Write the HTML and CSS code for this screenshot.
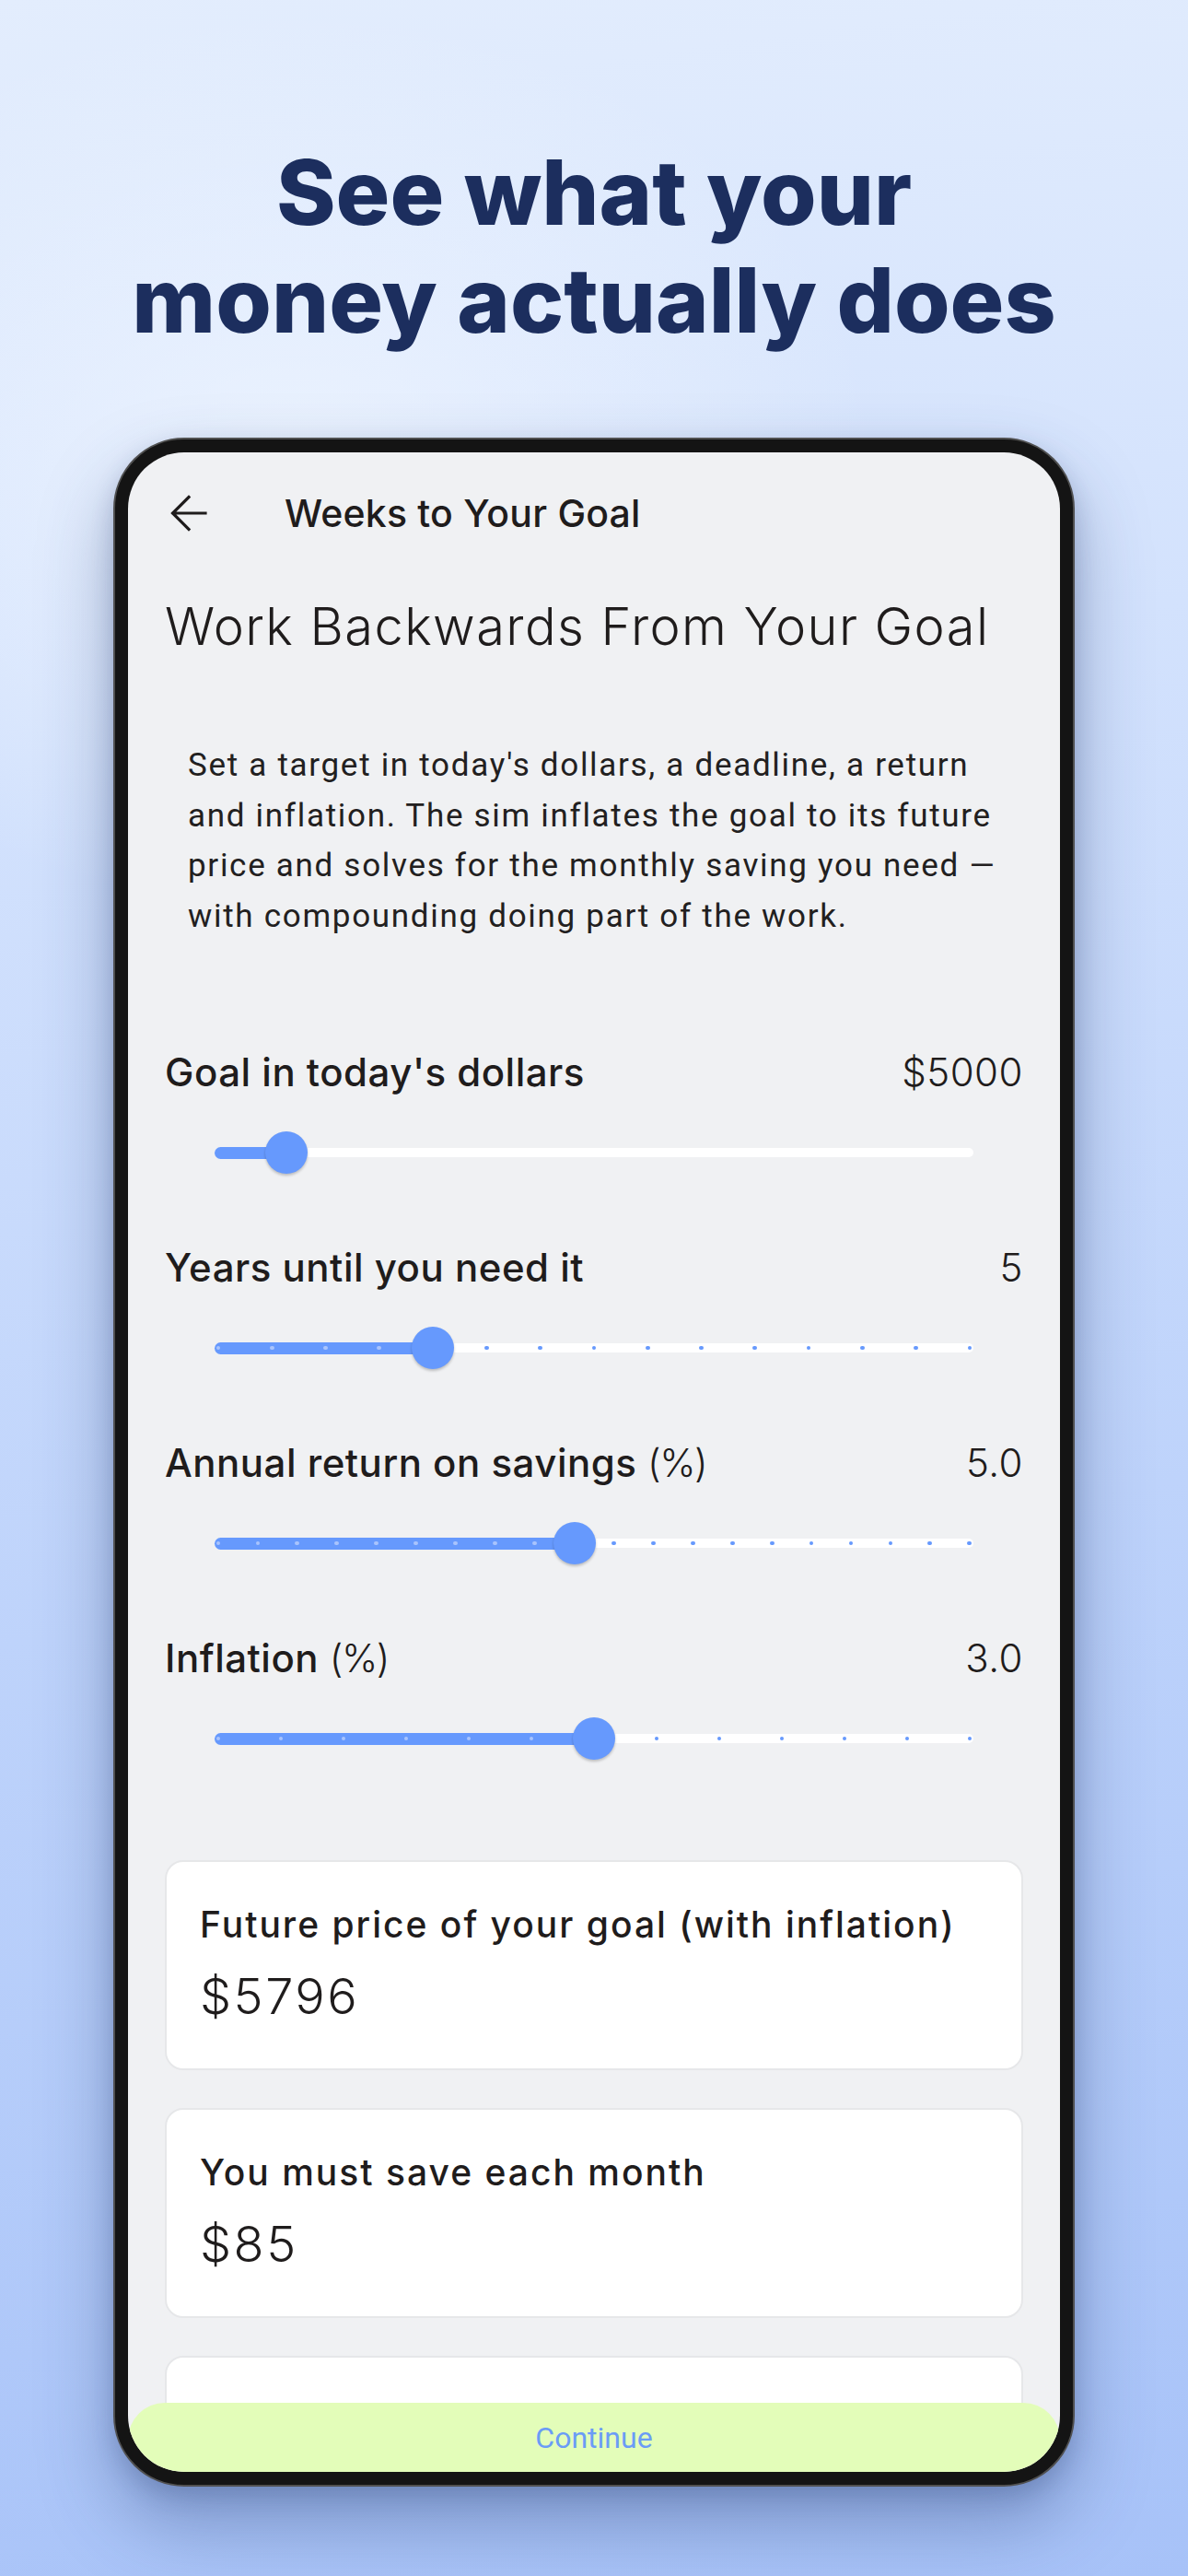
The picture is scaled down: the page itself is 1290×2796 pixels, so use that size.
FILE: index.html
```html
<!DOCTYPE html>
<html lang="en">
<head>
<meta charset="utf-8">
<title>See what your money actually does</title>
<link rel="stylesheet" href="styles.css">
</head>
<body>
<div class="page">
  <h1 class="headline">See what your<br>money actually does</h1>

  <div class="phone">
    <div class="screen">
      <header class="appbar">
        <svg class="back" viewBox="0 0 40 40" width="40" height="40" aria-hidden="true">
          <path d="M38 20 H3 M20 2.5 L2.5 20 L20 37.5" fill="none" stroke="#1f1c1c" stroke-width="3.2" stroke-linecap="square" stroke-linejoin="miter"/>
        </svg>
        <span class="appbar-title">Weeks to Your Goal</span>
      </header>

      <main class="content">
        <h2 class="title">Work Backwards From Your Goal</h2>
        <p class="desc">Set a target in today's dollars, a deadline, a return and inflation. The sim inflates the goal to its future price and solves for the monthly saving you need — with compounding doing part of the work.</p>

        <section class="field">
          <div class="field-row"><span class="field-label">Goal in today's dollars</span><span class="field-value">$5000</span></div>
          <div class="slider">
            <div class="track">
              <div class="active" style="--p:0.0909"></div>
              <div class="thumb" style="--p:0.0909"></div>
            </div>
          </div>
        </section>

        <section class="field">
          <div class="field-row"><span class="field-label">Years until you need it</span><span class="field-value">5</span></div>
          <div class="slider">
            <div class="track">
              <div class="active" style="--p:0.2857"></div>
              <div class="dots">
                <i class="on"></i><i class="on"></i><i class="on"></i><i class="on"></i><i class="on"></i>
                <i></i><i></i><i></i><i></i><i></i><i></i><i></i><i></i><i></i><i></i>
              </div>
              <div class="thumb" style="--p:0.2857"></div>
            </div>
          </div>
        </section>

        <section class="field">
          <div class="field-row"><span class="field-label">Annual return on savings <span class="pct">(%)</span></span><span class="field-value">5.0</span></div>
          <div class="slider">
            <div class="track">
              <div class="active" style="--p:0.47368"></div>
              <div class="dots">
                <i class="on"></i><i class="on"></i><i class="on"></i><i class="on"></i><i class="on"></i>
                <i class="on"></i><i class="on"></i><i class="on"></i><i class="on"></i><i class="on"></i>
                <i></i><i></i><i></i><i></i><i></i><i></i><i></i><i></i><i></i><i></i>
              </div>
              <div class="thumb" style="--p:0.47368"></div>
            </div>
          </div>
        </section>

        <section class="field">
          <div class="field-row"><span class="field-label">Inflation <span class="pct">(%)</span></span><span class="field-value">3.0</span></div>
          <div class="slider">
            <div class="track">
              <div class="active" style="--p:0.5"></div>
              <div class="dots">
                <i class="on"></i><i class="on"></i><i class="on"></i><i class="on"></i><i class="on"></i>
                <i class="on"></i><i class="on"></i>
                <i></i><i></i><i></i><i></i><i></i><i></i>
              </div>
              <div class="thumb" style="--p:0.5"></div>
            </div>
          </div>
        </section>

        <div class="cards">
          <div class="card">
            <div class="card-label">Future price of your goal (with inflation)</div>
            <div class="card-value">$5796</div>
          </div>
          <div class="card">
            <div class="card-label">You must save each month</div>
            <div class="card-value">$85</div>
          </div>
          <div class="card">
            <div class="card-label">&nbsp;</div>
            <div class="card-value">&nbsp;</div>
          </div>
        </div>
      </main>

      <button class="continue" type="button">Continue</button>
    </div>
  </div>
</div>
</body>
</html>
```

FILE: styles.css
```css
* { box-sizing: border-box; }

html, body {
  margin: 0;
  padding: 0;
}

body {
  width: 1290px;
  height: 2796px;
  overflow: hidden;
  font-family: Inter, "Noto Sans", sans-serif;
  background:
    radial-gradient(ellipse 900px 700px at 25% 18%, rgba(240, 246, 255, 0.75), rgba(240, 246, 255, 0) 70%),
    linear-gradient(172deg, #e3edfd 0%, #d3e2fd 28%, #bed3fb 60%, #a7c2f8 100%);
}

.page {
  display: flex;
  flex-direction: column;
  align-items: center;
  height: 2796px;
}

.headline {
  margin: 150px 0 0;
  font-family: Inter, "Noto Sans", sans-serif;
  font-weight: 800;
  font-size: 98px;
  line-height: 117px;
  letter-spacing: 0;
  color: #1c2e5e;
  text-align: center;
}

.phone {
  margin-top: 91px;
  width: 1044px;
  height: 2224px;
  padding: 14px;
  background: #141414;
  border: 2px solid #505050;
  border-radius: 77px;
  box-shadow: 0 40px 80px rgba(40, 62, 115, 0.38), 0 10px 24px rgba(40, 62, 115, 0.2);
}

.screen {
  width: 100%;
  height: 100%;
  background: #f0f1f3;
  border-radius: 61px;
  overflow: hidden;
  display: flex;
  flex-direction: column;
}

.appbar {
  flex: none;
  height: 132px;
  display: flex;
  align-items: center;
  padding-left: 46px;
}

.back {
  flex: none;
  display: block;
}

.appbar-title {
  margin-left: 84px;
  font-size: 41px;
  line-height: 50px;
  font-weight: 500;
  color: #1f1c1c;
  letter-spacing: 0.2px;
}

.content {
  flex: 1;
  min-height: 0;
  overflow: hidden;
  padding: 0 40px;
}

.title {
  margin: 24px 0 0;
  font-size: 56px;
  line-height: 67px;
  font-weight: 300;
  color: #1f1c1c;
  letter-spacing: 1.4px;
}

.desc {
  margin: 90px 0 0;
  padding-left: 25px;
  font-family: Roboto, "Liberation Sans", sans-serif;
  font-size: 35px;
  line-height: 54.5px;
  letter-spacing: 1.7px;
  color: #222020;
}

.field {
  margin-top: 52px;
}

.field:first-of-type {
  margin-top: 117px;
}

.field-row {
  display: flex;
  justify-content: space-between;
  align-items: baseline;
  height: 50px;
  font-size: 42px;
  line-height: 50px;
  color: #1f1c1c;
}

.field-label {
  font-weight: 500;
  letter-spacing: 0.5px;
}

.pct {
  font-weight: 300;
  letter-spacing: -1.5px;
}

.field-value {
  font-weight: 300;
  letter-spacing: 0.5px;
}

.slider {
  margin-top: 14px;
  height: 96px;
  padding: 0 54px;
  display: flex;
  align-items: center;
}

.track {
  position: relative;
  width: 100%;
  height: 10px;
  border-radius: 5px;
  background: #ffffff;
}

.active {
  position: absolute;
  left: 0;
  top: -1.5px;
  height: 13px;
  width: calc(4px + var(--p) * (100% - 8px));
  border-radius: 6.5px;
  background: #6699fd;
}

.dots {
  position: absolute;
  inset: 0;
  display: flex;
  justify-content: space-between;
  align-items: center;
  padding: 0 1.6px;
}

.dots i {
  display: block;
  width: 4.8px;
  height: 4.8px;
  border-radius: 50%;
  background: #6699fd;
}

.dots i.on {
  background: #a9c4fd;
}

.thumb {
  position: absolute;
  top: 50%;
  left: calc(4px + var(--p) * (100% - 8px));
  width: 46px;
  height: 46px;
  margin: -23px 0 0 -23px;
  border-radius: 50%;
  background: #6699fd;
  box-shadow: 0 2px 3px rgba(0, 0, 0, 0.22);
}

.cards {
  margin-top: 84px;
  display: flex;
  flex-direction: column;
  gap: 41px;
}

.card {
  height: 228px;
  padding: 44px 36px 0;
  background: #ffffff;
  border: 2px solid #e6e7e9;
  border-radius: 20px;
}

.card-label {
  font-size: 39px;
  line-height: 48px;
  font-weight: 500;
  color: #1f1c1c;
  letter-spacing: 2px;
}

.card-value {
  margin-top: 22px;
  font-size: 54px;
  line-height: 64px;
  font-weight: 300;
  color: #1f1c1c;
  letter-spacing: 2.5px;
}

.continue {
  flex: none;
  height: 75px;
  width: 100%;
  margin: 0;
  padding: 0;
  border: 0;
  border-radius: 40px 40px 0 0;
  background: #e3fdb9;
  font-family: Roboto, "Liberation Sans", sans-serif;
  font-size: 32px;
  color: #6b9cf6;
  text-align: center;
  cursor: pointer;
}
```
